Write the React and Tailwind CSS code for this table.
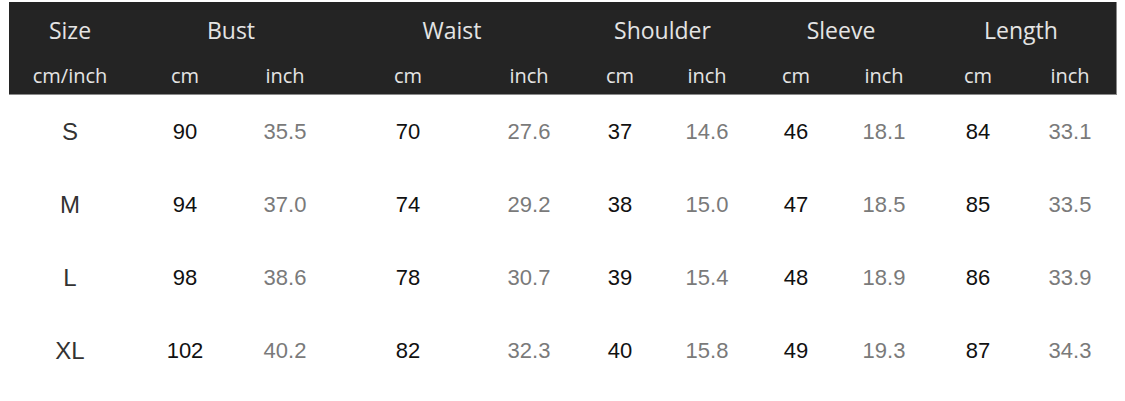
const cols = "grid grid-cols-[122px_108px_92px_154px_88px_94px_80px_98px_78px_110px_84px]";

const groups = [
  { name: "Bust", pad: "" },
  { name: "Waist", pad: "" },
  { name: "Shoulder", pad: "pl-[5px]" },
  { name: "Sleeve", pad: "pl-[12px]" },
  { name: "Length", pad: "pl-[2px]" },
];

const rows = [
  { size: "S", values: [["90", "35.5"], ["70", "27.6"], ["37", "14.6"], ["46", "18.1"], ["84", "33.1"]] },
  { size: "M", values: [["94", "37.0"], ["74", "29.2"], ["38", "15.0"], ["47", "18.5"], ["85", "33.5"]] },
  { size: "L", values: [["98", "38.6"], ["78", "30.7"], ["39", "15.4"], ["48", "18.9"], ["86", "33.9"]] },
  { size: "XL", values: [["102", "40.2"], ["82", "32.3"], ["40", "15.8"], ["49", "19.3"], ["87", "34.3"]] },
];

export default function App() {
  return (
    <div className="w-[1125px] h-[401px] bg-white pl-[9px] pt-[2px]">
      <div className="w-[1108px] bg-[#242424] border-r border-b border-[#8a8a8a] text-[#e4e4e4] font-['Open_Sans',sans-serif]">
        <div className={`${cols} h-[52px] items-center text-[23px] pt-[4px]`}>
          <div className="text-center">Size</div>
          {groups.map((g) => (
            <div key={g.name} className={`col-span-2 text-center ${g.pad}`}>
              {g.name}
            </div>
          ))}
        </div>
        <div className={`${cols} h-[40px] items-center text-[20px] pt-[4px]`}>
          <div className="text-center">cm/inch</div>
          {groups.map((g, i) => [
            <div key={g.name + "cm"} className="text-center">cm</div>,
            <div key={g.name + "in"} className={`text-center ${i === 4 ? "pr-[10px]" : ""}`}>inch</div>,
          ])}
        </div>
      </div>

      <div className="font-['Liberation_Sans',Arial,sans-serif]">
        {rows.map((r) => (
          <div key={r.size} className={`${cols} h-[73px] items-center`}>
            <div className="text-center text-[24px] text-[#333]">{r.size}</div>
            {r.values.map(([cm, inch], i) => [
              <div key={i + "c"} className="text-center text-[22px] text-[#111]">{cm}</div>,
              <div key={i + "i"} className={`text-center text-[22px] text-[#7a7a7a] ${i === 4 ? "pr-[10px]" : ""}`}>{inch}</div>,
            ])}
          </div>
        ))}
      </div>
    </div>
  );
}
